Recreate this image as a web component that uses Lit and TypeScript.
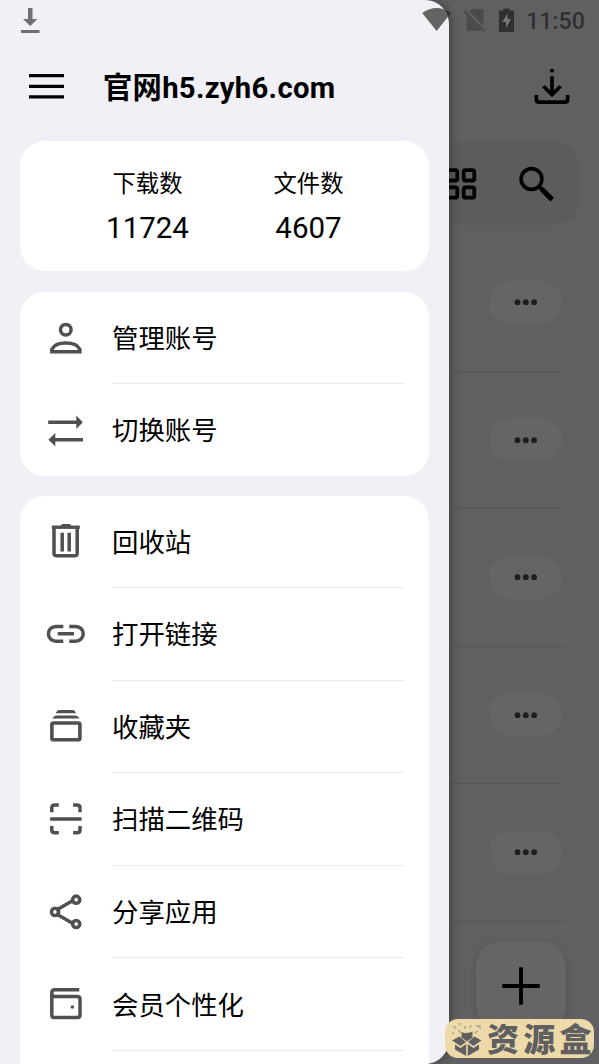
import { LitElement, html, css, svg } from "lit";
import { customElement } from "lit/decorators.js";

const glyphs: Record<string, unknown> = {
  user: svg`<circle cx="19.8" cy="11.8" r="5.3"/><path d="M5.8 33.7V31.5C8 26.9 14 25.1 19.8 25.1S31.8 26.9 33.9 31.5V33.7Z"/>`,
  swap: svg`<path d="M2.2 12.2H32M8 29.7H37"/><path class="fill" d="M30.3 5.5L36.8 12.2L30.3 19ZM9.3 23L2.4 29.7L9.3 36.3Z"/>`,
  trash: svg`<path d="M8 6V31.5Q8 33.8 10.7 33.8H28.5Q31.2 33.8 31.2 31.5V6"/><path d="M5.8 5.2H33.8" stroke-width="3.4"/><path class="fill" d="M14 4.5L16.2 2H23.8L26 4.5Z"/><path d="M16.2 10.8V29.4M23.2 10.8V29.4"/>`,
  link: svg`<path d="M17.3 12.4H9.8A7.4 7.4 0 0 0 9.8 27.2H17.3M23.3 12.4H29.8A7.4 7.4 0 0 1 29.8 27.2H23.3M11.7 19.8H28" stroke-width="3.5"/>`,
  stack: svg`<rect x="5.9" y="17" width="28" height="16.8" rx="1.6" stroke-width="3.6"/><path class="fill" d="M6.3 12.5Q8 9.4 10.3 9.4H29.5Q32 9.4 33.6 12.5ZM9.8 7.2Q11.1 4.1 13.1 4.1H26.8Q28.8 4.1 30.1 7.2Z"/>`,
  scan: svg`<path d="M5.8 13.2V8.8Q5.8 6 8.8 6H12.8M27.1 6H31Q34 6 34 8.8V13.2M5.8 27V31Q5.8 33.8 8.8 33.8H12.8M27.1 33.8H31Q34 33.8 34 31V27M4.1 19.9H35.6" stroke-width="3.5"/>`,
  share: svg`<path d="M10 18.2L27 8.6M10 21.8L27 31.4"/><circle cx="9.1" cy="19.9" r="3.6"/><circle cx="30.2" cy="7.7" r="3.6"/><circle cx="30.2" cy="32" r="3.6"/>`,
  wallet: svg`<path d="M33.3 5.7H8.8Q5.8 5.7 5.8 9V31Q5.8 33.6 8.6 33.6H31.2Q34 33.6 34 31V15.2Q34 12.6 31.2 12.6H9Q5.8 12.6 5.8 9.3"/><circle class="fill" cx="26.4" cy="23" r="1.8"/>`,
};

@customElement("menu-row")
class MenuRow extends LitElement {
  static properties = { icon: {}, label: {} };
  declare icon: string;
  declare label: string;
  static styles = css`
    :host { display: flex; align-items: center; height: 91.3px; padding-left: 26px; }
    :host(:not(:first-child)) { height: 92.55px; }
    svg { width: 40px; height: 40px; flex: none; fill: none; stroke: #505050; stroke-width: 3.5; padding-top: 1px; }
    .fill { fill: #505050; stroke: none; }
    .label {
      flex: 1; align-self: stretch; display: flex; align-items: center;
      margin: 0 25px 0 26px; padding-top: 3px; box-sizing: border-box; font-size: 26.4px; line-height: 36px;
      white-space: nowrap;
    }
    :host(:not(:first-child)) .label { border-top: 1px solid #e9e9eb; }
  `;
  render() {
    return html`<svg viewBox="0 0 40 40">${glyphs[this.icon]}</svg><div class="label">${this.label}</div>`;
  }
}

@customElement("file-list")
class FileList extends LitElement {
  static styles = css`
    :host { display: block; padding: 9px 36px 0 20px; }
    .row {
      display: flex; align-items: center; justify-content: flex-end;
      height: 137.5px; box-sizing: border-box; border-bottom: 1px solid #575759;
    }
    .pill {
      display: flex; align-items: center; justify-content: center;
      width: 73px; height: 43px; border-radius: 22px; background: #656565; margin-right: 1px;
    }
    svg { display: block; fill: #1d1d1d; }
  `;
  render() {
    return html`${[0, 1, 2, 3, 4].map(
      () => html`<div class="row"><div class="pill"><svg width="24" height="8" viewBox="0 0 24 8"><circle cx="3.5" cy="4.2" r="2.9"/><circle cx="11.8" cy="4.2" r="2.9"/><circle cx="20.1" cy="4.2" r="2.9"/></svg></div></div>`
    )}`;
  }
}

@customElement("app-root")
class AppRoot extends LitElement {
  static styles = css`
    :host {
      display: block; position: relative; width: 599px; height: 1064px; overflow: hidden;
      background: #606062; color: #000;
      font-family: Roboto, "Noto Sans CJK SC", sans-serif;
    }
    svg { display: block; flex: none; }
    .page { height: 100%; }
    .topbar { height: 142px; box-sizing: border-box; padding: 66px 26px 0 0; display: flex; justify-content: flex-end; }
    .tools {
      height: 83px; margin: 0 20px; border-radius: 24px; background: #5c5c5e;
      display: flex; align-items: center; justify-content: flex-end; gap: 40px; padding-right: 22px;
    }
    .fab {
      position: absolute; left: 476px; top: 941px; width: 90px; height: 90px; border-radius: 25px;
      background: #656565; box-shadow: 0 2px 7px rgba(0, 0, 0, 0.17);
      display: flex; align-items: center; justify-content: center;
    }
    .drawer {
      position: absolute; inset: 0 auto 0 0; width: 449px; box-sizing: border-box; padding: 0 20px;
      background: #f1f0f6; border-radius: 0 24px 24px 0; overflow: hidden;
    }
    .shade {
      position: absolute; left: 425px; top: 0; width: 24px; height: 1064px;
      border-radius: 0 24px 24px 0; box-shadow: 2px 0 10px rgba(0, 0, 0, 0.32);
    }
    .head { display: flex; align-items: center; height: 141px; box-sizing: border-box; padding: 33px 0 0 9px; gap: 38px; }
    .title { font-size: 29.3px; font-weight: 700; line-height: 36px; letter-spacing: 0.27px; padding-top: 1px; white-space: nowrap; }
    .card { background: #fff; border-radius: 25px; margin-bottom: 20.3px; }
    .stats { display: grid; grid-template-columns: 161px 161px; justify-content: center; height: 130.4px; box-sizing: border-box; padding: 26px 0 0 7px; text-align: center; }
    .cap { font-size: 23.3px; line-height: 34px; }
    .num { font-size: 29.5px; line-height: 36px; margin-top: 9px; }
    .status { position: absolute; inset: 0 0 auto 0; height: 40px; display: flex; align-items: center; }
    .status .grow { flex: 1; }
    .clock { font-size: 23.2px; font-weight: 500; color: #303031; width: 73px; line-height: 28px; padding-top: 2px; }
    .mark {
      position: absolute; left: 445px; top: 1019px; width: 149px; height: 39px; box-sizing: border-box;
      border-radius: 13px; background: #eedaa8; color: #606062; display: flex; align-items: center; gap: 3px; padding-left: 5px;
      font: 900 32px/37px "Noto Sans CJK SC", sans-serif; letter-spacing: 4.3px; white-space: nowrap;
    }
    .mark span { padding-bottom: 3px; }
  `;

  rows(items: string[][]) {
    return html`<div class="card">${items.map(([i, t]) => html`<menu-row .icon=${i} .label=${t}></menu-row>`)}</div>`;
  }

  render() {
    return html`
      <div class="page">
        <div class="topbar">
          <svg width="42" height="42" viewBox="0 0 42 42" fill="none" stroke="#000" stroke-width="3.7">
            <path d="M21 3V6.2M21 10V28M12.5 20.2L21 28.7L29.5 20.2M5.4 29V33.5Q5.4 36.2 8 36.2H34Q36.6 36.2 36.6 33.5V29"/>
          </svg>
        </div>
        <div class="tools">
          <svg width="36" height="36" viewBox="0 0 36 36" fill="none" stroke="#000" stroke-width="3.8">
            <rect x="5.7" y="4.2" width="10.6" height="10.3" rx="2"/><rect x="22.7" y="4.2" width="10.6" height="10.3" rx="2"/>
            <rect x="5.7" y="21.4" width="10.6" height="10.3" rx="2"/><rect x="22.7" y="21.4" width="10.6" height="10.3" rx="2"/>
          </svg>
          <svg width="40" height="40" viewBox="0 0 40 40" fill="none" stroke="#000">
            <circle cx="14.5" cy="15" r="10.4" stroke-width="3.6"/><path d="M22 22.4L26 26.4" stroke-width="3.5"/><path d="M24.3 24.8L35.2 35.6" stroke-width="5"/>
          </svg>
        </div>
        <file-list></file-list>
        <div class="fab"><svg width="38" height="38" viewBox="0 0 38 38" stroke="#000" stroke-width="3.8"><path d="M0.3 19H37.7M19 0.3V37.7"/></svg></div>
      </div>

      <div class="shade"></div>
      <div class="drawer">
        <div class="head">
          <svg width="36" height="26" viewBox="0 0 36 26" stroke="#000" stroke-width="3.2"><path d="M0 1.7H35M0 12.3H35M0 22.8H35"/></svg>
          <div class="title">官网h5.zyh6.com</div>
        </div>
        <div class="card stats">
          <div><div class="cap">下载数</div><div class="num">11724</div></div>
          <div><div class="cap">文件数</div><div class="num">4607</div></div>
        </div>
        ${this.rows([["user", "管理账号"], ["swap", "切换账号"]])}
        ${this.rows([["trash", "回收站"], ["link", "打开链接"], ["stack", "收藏夹"], ["scan", "扫描二维码"], ["share", "分享应用"], ["wallet", "会员个性化"], ["", ""]])}
      </div>

      <div class="status">
        <svg width="60" height="40" viewBox="0 0 60 40" fill="#707074"><path d="M28 8H32.5V19H37.5L30.2 26L23 19H28ZM21 30H39.5V33H21Z"/></svg>
        <div class="grow"></div>
        <svg width="104" height="40" viewBox="0 0 104 40">
          <path d="M.2 13Q14.5 3.2 29 13L14.6 31Z" fill="#636365"/>
          <path d="M22.5 9.6Q26 11 29 13L26 16.7Q25.2 12.5 22.5 9.6Z" fill="#303031"/>
          <path d="M50 9H60Q61.5 9 61.5 10.5V25.5L48.3 12.3L46.5 12.8ZM44.7 14.8L60.5 31H46.2Q44.7 31 44.7 29.5Z" fill="#4a4a4c"/>
          <path d="M42.5 11L62.5 31" stroke="#4a4a4c" stroke-width="2"/>
          <path d="M77 10.5H81.5V8.5H87.5V10.5H92V32H77Z" fill="#303031"/><path d="M85.5 13.5L80.3 22H84V28L89 19H85.5Z" fill="#767678"/>
        </svg>
        <div class="clock">11:50</div>
      </div>

      <div class="mark">
        <svg width="34" height="38" viewBox="0 0 34 38" fill="#606062">
          <path d="M11.5 12L14.5 13.2L20 12.5L22.5 11.5V17.5L17 21.5L11.5 17.5ZM9.5 16.5L16 22L10.5 26L2 20.5ZM24.5 16.5L18 22L23.5 26L31.5 20.5ZM5 24.5L10.5 28L16.2 24V36L5 29.5ZM29 24.5L23.5 28L17.8 24V36L29 29.5Z"/>
          <path d="M3.5 6L6 8.5M9 4H11M15 6V9M21 5L20 8M26 6H30V9M28 11L25 13M2 13H4M8 10L11 13" stroke="#a29d8c" stroke-width="1.3" fill="none"/>
        </svg>
        <span>资源盒</span>
      </div>
    `;
  }
}
